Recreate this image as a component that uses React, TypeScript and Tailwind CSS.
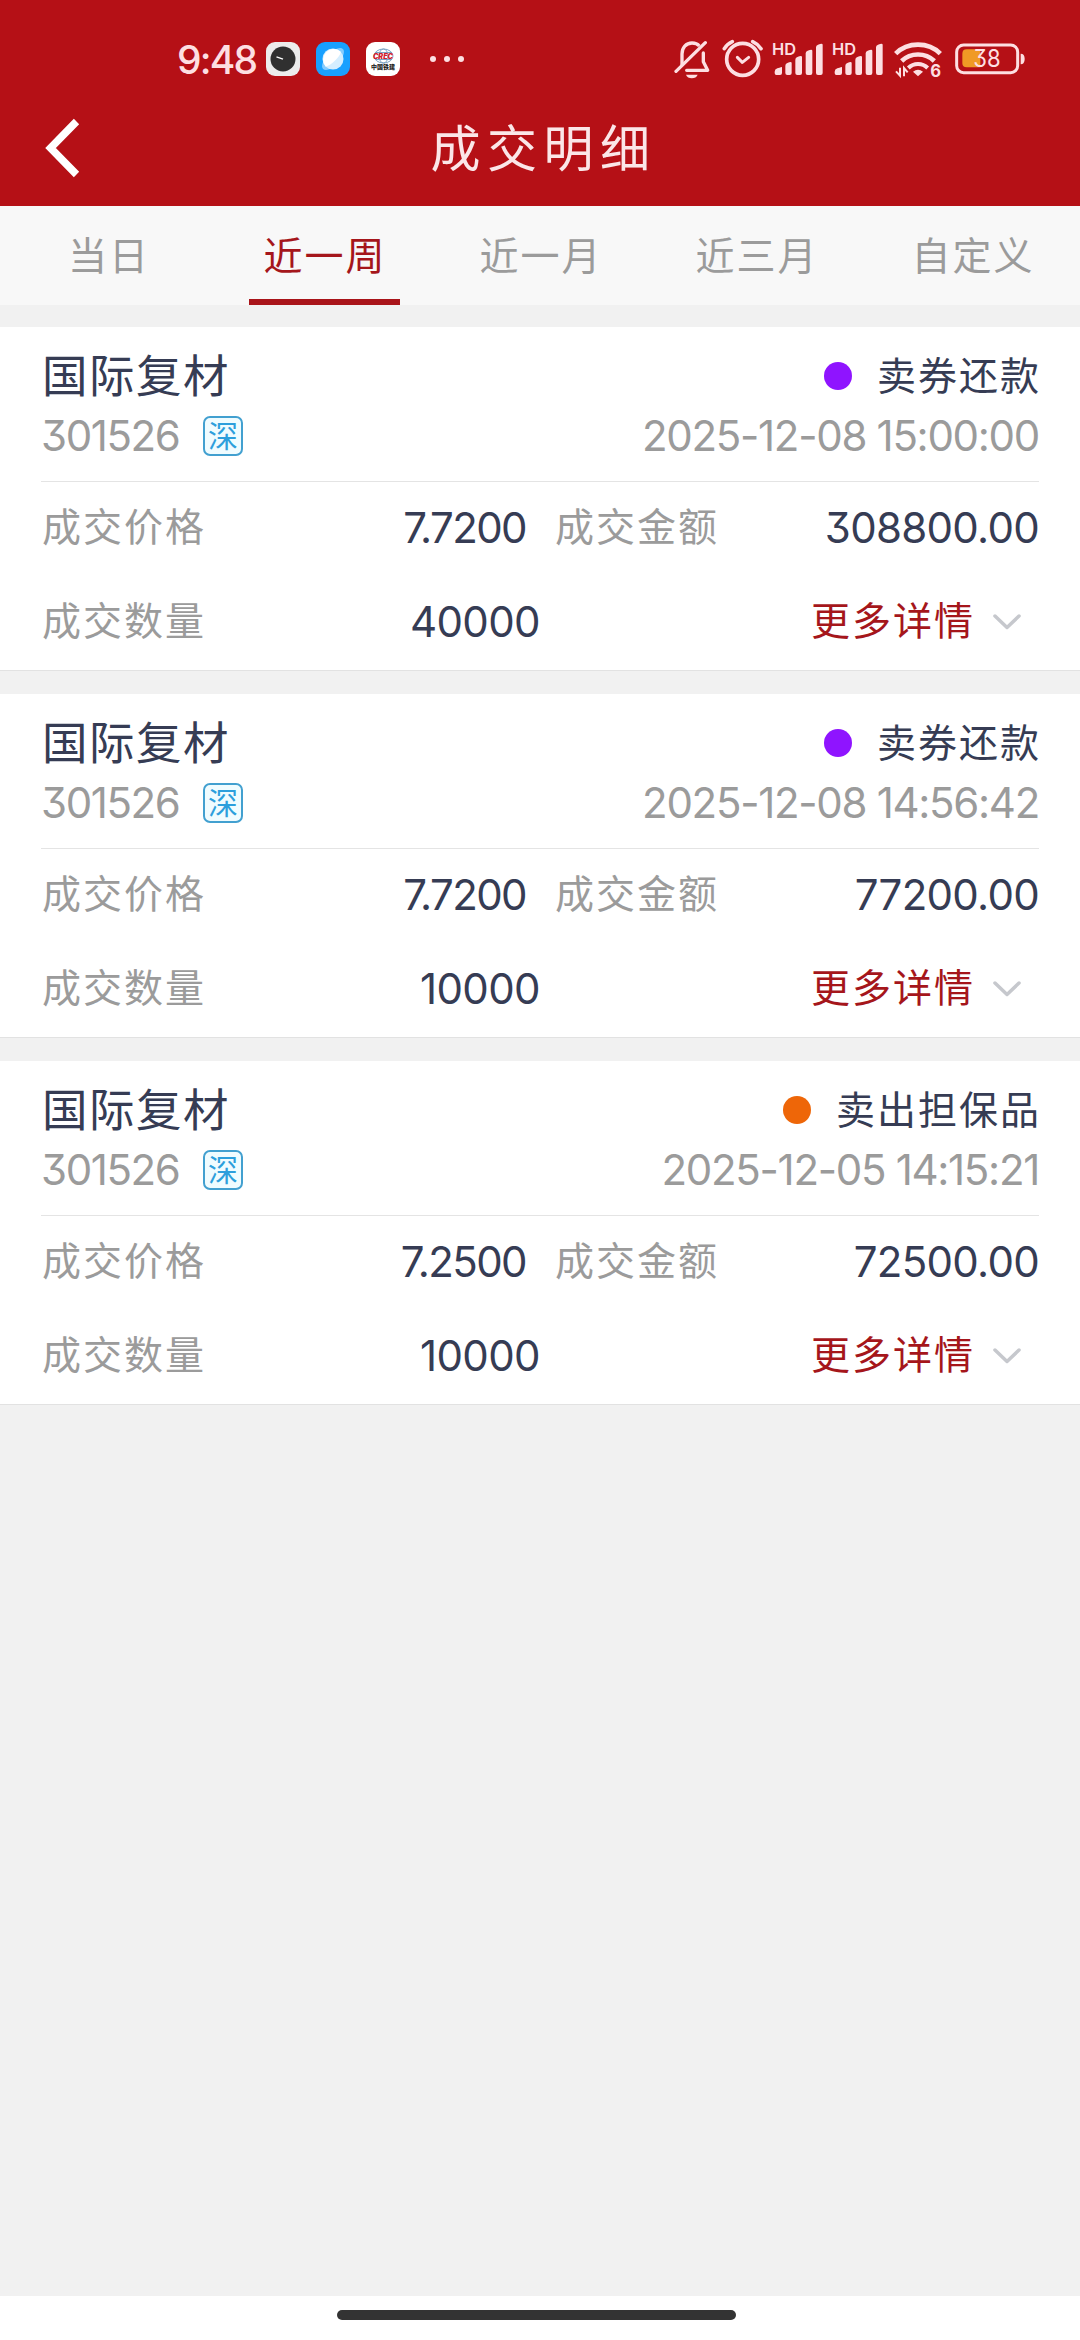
import type { ReactNode } from "react";

type Trade = {
  id: number;
  name: string;
  code: string;
  market: string;
  action: string;
  dotClass: string;
  time: string;
  price: string;
  amount: string;
  quantity: string;
};

const tabs = ["当日", "近一周", "近一月", "近三月", "自定义"];
const activeTab = "近一周";

const trades: Trade[] = [
  {
    id: 1,
    name: "国际复材",
    code: "301526",
    market: "深",
    action: "卖券还款",
    dotClass: "bg-[#8f14ff]",
    time: "2025-12-08 15:00:00",
    price: "7.7200",
    amount: "308800.00",
    quantity: "40000",
  },
  {
    id: 2,
    name: "国际复材",
    code: "301526",
    market: "深",
    action: "卖券还款",
    dotClass: "bg-[#8f14ff]",
    time: "2025-12-08 14:56:42",
    price: "7.7200",
    amount: "77200.00",
    quantity: "10000",
  },
  {
    id: 3,
    name: "国际复材",
    code: "301526",
    market: "深",
    action: "卖出担保品",
    dotClass: "bg-[#ee6608]",
    time: "2025-12-05 14:15:21",
    price: "7.2500",
    amount: "72500.00",
    quantity: "10000",
  },
];

export default function App() {
  return (
    <div className="flex h-[2340px] w-[1080px] flex-col overflow-hidden bg-[#f1f1f1] font-['Inter','Noto_Sans_CJK_SC',sans-serif] [font-feature-settings:'cv09']">
      <header className="h-[206px] shrink-0 bg-[#b51016]">
        <StatusBar />
        <div className="grid h-[106px] grid-cols-[200px_1fr_200px] items-center pb-[11px]">
          <svg className="ml-[45px]" width="36" height="60" viewBox="0 0 36 60" fill="none">
            <path d="M31.500 3.500 5.500 30l26 26.500" stroke="#fff" strokeWidth="7.500" />
          </svg>
          <h1 className="pt-[3px] pl-[7px] text-center text-[50px] leading-none tracking-[6.5px] text-[#fbe6e8]">
            成交明细
          </h1>
        </div>
      </header>

      <nav className="grid h-[99px] shrink-0 grid-cols-5 bg-[#f8f8f8]">
        {tabs.map((tab) => (
          <Tab key={tab} label={tab} active={tab === activeTab} />
        ))}
      </nav>

      <main className="flex grow flex-col gap-[23px] pt-[22px]">
        {trades.map((trade) => (
          <TradeCard key={trade.id} trade={trade} />
        ))}
      </main>

      <footer className="flex h-[44px] shrink-0 justify-center bg-white pt-[14px] pr-[7px]">
        <div className="h-[10px] w-[399px] rounded-full bg-[#333333]" />
      </footer>
    </div>
  );
}

function Tab({ label, active }: { label: string; active: boolean }) {
  return (
    <button type="button" className="flex flex-col items-center">
      <span
        className={`flex h-[93px] items-center pt-[5px] pl-[2px] text-[39px] leading-none tracking-[2px] ${
          active ? "text-[#a5161b]" : "text-[#9b9b9b]"
        }`}
      >
        {label}
      </span>
      {active && <span className="h-[6px] w-[151px] bg-[#a9141a]" />}
    </button>
  );
}

function TradeCard({ trade }: { trade: Trade }) {
  return (
    <article className="flex h-[344px] shrink-0 flex-col border-b border-[#e2e2e2] bg-white px-[41px] text-[#363c54]">
      <div className="flex h-[155px] flex-col border-b border-[#e4e4e4] pt-[18px]">
        <div className="flex h-[61px] items-center justify-between">
          <span className="pt-[2px] pl-px text-[45.500px] leading-none tracking-[1.5px]">{trade.name}</span>
          <span className="-mr-[2px] flex items-center">
            <span className={`mr-[25px] size-[28px] rounded-full ${trade.dotClass}`} />
            <Label>{trade.action}</Label>
          </span>
        </div>
        <div className="flex h-[60px] items-center justify-between text-[#9b9b9b]">
          <span className="flex items-center">
            <Num className="w-[137px] tracking-[-1.4px]">{trade.code}</Num>
            <span className="ml-[25px] flex size-[40px] items-center justify-center rounded-[7px] border-2 border-[#42a0d0] bg-[#f0fcff] text-[30px] leading-none text-[#2d9fdc]">
              {trade.market}
            </span>
          </span>
          <Num className="tracking-[-1.3px]">{trade.time}</Num>
        </div>
      </div>

      <div className="flex h-[94px] items-center pb-[3px]">
        <Label className="w-[240px] pb-[2px] pl-px text-[#9b9b9b]">成交价格</Label>
        <Num className="w-[245px] text-right tracking-[-1.6px]">{trade.price}</Num>
        <Label className="ml-[29px] pb-[2px] text-[#9b9b9b]">成交金额</Label>
        <Num className="grow text-right tracking-[-0.7px]">{trade.amount}</Num>
      </div>

      <div className="flex h-[94px] items-center pb-[3px]">
        <Label className="w-[240px] pb-[2px] pl-px text-[#9b9b9b]">成交数量</Label>
        <Num className="w-[259px] text-right tracking-[-0.6px]">{trade.quantity}</Num>
        <button type="button" className="ml-auto flex items-center pr-[17px] text-[#a5161b]">
          <Label className="pb-[2px]">更多详情</Label>
          <svg className="ml-[17px]" width="30" height="18" viewBox="0 0 30 18" fill="none">
            <path
              d="m3 3 12 11.500L27 3"
              stroke="#c6c8cd"
              strokeWidth="3.500"
              strokeLinecap="round"
              strokeLinejoin="round"
            />
          </svg>
        </button>
      </div>
    </article>
  );
}

function Label({ children, className = "" }: { children: ReactNode; className?: string }) {
  return (
    <span className={`text-[39px] leading-none tracking-[2px] ${className}`}>{children}</span>
  );
}

function Num({ children, className = "" }: { children: ReactNode; className?: string }) {
  return (
    <span className={`text-[42px] leading-none whitespace-nowrap ${className}`}>{children}</span>
  );
}

function StatusBar() {
  return (
    <div className="flex h-[100px] items-center justify-between pt-[18px] pr-[55px] pl-[177px]">
      <div className="flex items-center">
        <span className="w-[89px] text-[39px] leading-none font-medium tracking-[-1.8px] whitespace-nowrap text-[#fddfe2]">
          9:48
        </span>
        <div className="flex gap-[16px]">
          <svg width="34" height="34" viewBox="0 0 34 34">
            <rect width="34" height="34" rx="9" fill="#ececec" />
            <circle cx="17" cy="17" r="12.500" fill="#303030" />
            <path d="m10.500 14.800 6.500 2.400" stroke="#fff" strokeWidth="1.300" />
          </svg>
          <svg width="34" height="34" viewBox="0 0 34 34">
            <rect width="34" height="34" rx="9" fill="#18a0ff" />
            <ellipse cx="17" cy="17" rx="14" ry="6.500" transform="rotate(-45 17 17)" fill="#85ccff" />
            <circle cx="17" cy="17" r="10.500" fill="#d5eeff" />
            <path d="M9.600 24.400A10.500 10.500 0 0 1 24.400 9.600c2 3-10 15-14.800 14.800Z" fill="#fff" />
          </svg>
          <svg width="34" height="34" viewBox="0 0 34 34">
            <rect width="34" height="34" rx="9" fill="#fff" />
            <g fill="none" stroke="#7ca3c4" strokeWidth="1">
              <ellipse cx="17.500" cy="14" rx="9.500" ry="7" />
              <ellipse cx="17.500" cy="14" rx="4.500" ry="7" />
              <path d="M9 10.500h17M9 17.500h17" />
            </g>
            <text x="7" y="16.500" fontSize="7" fontWeight="900" fontStyle="italic" fill="#d3202c" textLength="20" lengthAdjust="spacingAndGlyphs">
              CREC
            </text>
            <text x="5" y="27" fontSize="6" fontWeight="900" fill="#222" textLength="24">
              中国铁建
            </text>
          </svg>
        </div>
        <svg className="ml-[30px]" width="34" height="6" viewBox="0 0 34 6" fill="#fddfe2">
          <circle cx="3" cy="3" r="3" />
          <circle cx="17" cy="3" r="3" />
          <circle cx="31" cy="3" r="3" />
        </svg>
      </div>

      <div className="flex items-center">
        <BellOffIcon />
        <AlarmIcon />
        <SignalIcon />
        <SignalIcon />
        <WifiIcon />
        <BatteryIcon />
      </div>
    </div>
  );
}

// The status icons share a 40px tall box, drawn at three units per pixel.

function BellOffIcon() {
  return (
    <svg className="mr-[12px]" width="36" height="40" viewBox="0 0 108 120" fill="none" stroke="#fddfe2" strokeWidth="10">
      <path d="M24 78V45c0-19 12-33 30-33 9 0 17 3 22 9" />
      <path d="M88 42v26l13 26H38" strokeLinejoin="round" strokeLinecap="round" />
      <path d="M6 97 94 11" strokeLinecap="round" />
      <path d="M36 107h35c-4 14-31 14-35 0Z" fill="#fddfe2" stroke="none" />
    </svg>
  );
}

function AlarmIcon() {
  return (
    <svg className="mr-[8px]" width="42" height="40" viewBox="0 0 126 120" fill="none" stroke="#fddfe2" strokeWidth="11">
      <circle cx="62" cy="61" r="48" />
      <path d="m46 55 15 15 19-15" strokeWidth="9" strokeLinecap="round" strokeLinejoin="round" />
      <path d="M7 29c6-10 13-16 24-21M92 8c11 5 19 12 25 21" strokeWidth="11" strokeLinecap="round" />
    </svg>
  );
}

function SignalIcon() {
  return (
    <svg className="mr-[8px]" width="52" height="40" viewBox="0 0 156 120" fill="#fddfe2">
      <text x="0" y="48" fontSize="49" fontWeight="600" textLength="72" lengthAdjust="spacingAndGlyphs">
        HD
      </text>
      <path d="M8 98q0-8 8-10 14-4 14-4v18q0 6-6 6H13q-5 0-5-6Z" />
      <path d="M40 80q0-6 6-8 13-6 13 0v30q0 6-6 6h-7q-6 0-6-6Z" />
      <path d="M70 62q0-6 6-8 14-6 14 0v48q0 6-6 6h-8q-6 0-6-6Z" />
      <path d="M101 43q0-6 6-8 14-6 14 0v67q0 6-6 6h-8q-6 0-6-6Z" />
      <path d="M132 25q0-6 6-8 14-6 14 0v85q0 6-6 6h-8q-6 0-6-6Z" />
    </svg>
  );
}

function WifiIcon() {
  return (
    <svg className="mr-[11px] ml-[2px] overflow-visible" width="50" height="40" viewBox="0 0 150 120" fill="none" stroke="#fddfe2" strokeWidth="14">
      <path d="M5 44c36-36 98-36 134 0" />
      <path d="M23 66c27-26 71-26 98 0" />
      <path d="M43 87c16-16 42-16 58 0" strokeWidth="12" />
      <path d="M57 98q15-11 30 0L72 112Z" fill="#fddfe2" stroke="none" />
      <path d="M18 86v24L6 97M30 112V87l11 13" strokeWidth="6" />
      <text x="109" y="115" fontSize="50" fontWeight="700" fill="#fddfe2" stroke="none">
        6
      </text>
    </svg>
  );
}

function BatteryIcon() {
  return (
    <svg width="70" height="40" viewBox="0 0 210 120">
      <rect x="5" y="18" width="183" height="83" rx="21" fill="none" stroke="#fddfe2" strokeWidth="9" />
      <path d="M35 31h41v54H35q-13 0-13-13V44q0-13 13-13Z" fill="#f09a25" />
      <path d="M197 44q12 0 12 16t-12 16Z" fill="#fddfe2" />
      <text x="55" y="85" fontSize="71" fill="#fddfe2" textLength="82" lengthAdjust="spacingAndGlyphs">
        38
      </text>
    </svg>
  );
}
